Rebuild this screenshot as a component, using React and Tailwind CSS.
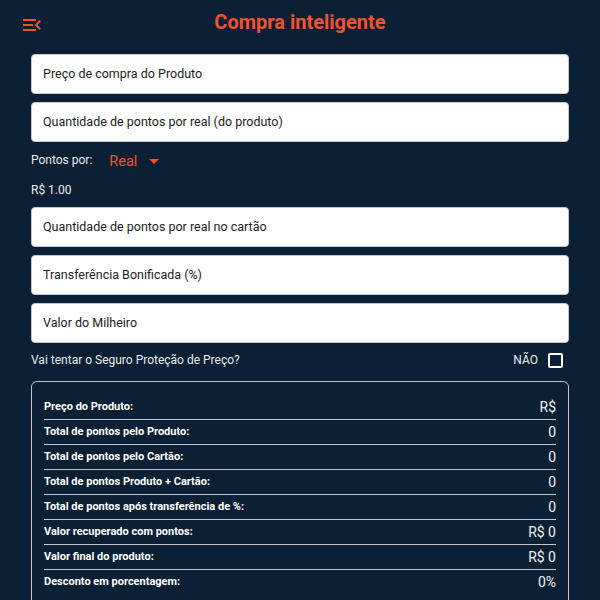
import React from "react";

const Field = ({ label }) => (
  <div className="h-[40px] w-full rounded-[4px] border border-[#c4c8cc] bg-white flex items-center px-[11px] text-[12.5px] text-[#1c1c1c]">
    {label}
  </div>
);

const rows = [
  ["Preço do Produto:", "R$"],
  ["Total de pontos pelo Produto:", "0"],
  ["Total de pontos pelo Cartão:", "0"],
  ["Total de pontos Produto + Cartão:", "0"],
  ["Total de pontos após transferência de %:", "0"],
  ["Valor recuperado com pontos:", "R$ 0"],
  ["Valor final do produto:", "R$ 0"],
  ["Desconto em porcentagem:", "0%"],
];

export default function App() {
  return (
    <div
      className="w-[600px] h-[600px] overflow-hidden bg-[#0b2034] text-white"
      style={{ fontFamily: "Roboto, 'Liberation Sans', sans-serif" }}
    >
      <div className="relative h-[44px] flex items-center justify-center">
        <svg
          className="absolute left-[20px] top-[13px]"
          width="24"
          height="24"
          viewBox="0 0 24 24"
          fill="#f4522d"
        >
          <path d="M3 18h13v-2H3v2zm0-5h10v-2H3v2zm0-7v2h13V6H3zm18 9.59L17.42 12 21 8.41 19.59 7l-5 5 5 5L21 15.59z" />
        </svg>
        <h1 className="text-[20px] font-bold text-[#f4522d] leading-none">Compra inteligente</h1>
      </div>
      <div className="px-[31px] pt-[10px] flex flex-col">
        <div className="flex flex-col gap-[8px]">
          <Field label="Preço de compra do Produto" />
          <Field label="Quantidade de pontos por real (do produto)" />
        </div>
        <div className="mt-[1px] h-[34px] flex items-center text-[12px] text-[#e8ecf0]">
          <span>Pontos por:</span>
          <span className="ml-[17px] mt-[3px] text-[14.5px] text-[#f4522d]">Real</span>
          <svg className="ml-[12px] mt-[2px]" width="10" height="5" viewBox="0 0 10 5" fill="#f4522d">
            <path d="M0 0h10L5 5z" />
          </svg>
        </div>
        <div className="h-[26px] flex items-center text-[12px] text-[#e8ecf0]">R$ 1.00</div>
        <div className="mt-[4px] flex flex-col gap-[8px]">
          <Field label="Quantidade de pontos por real no cartão" />
          <Field label="Transferência Bonificada (%)" />
          <Field label="Valor do Milheiro" />
        </div>
        <div className="h-[34px] flex items-center justify-between text-[12px] text-[#e8ecf0]">
          <span>Vai tentar o Seguro Proteção de Preço?</span>
          <div className="flex items-center gap-[10px] mr-[6px]">
            <span className="text-[12px]">NÃO</span>
            <div className="w-[15px] h-[15px] rounded-[2px] border-2 border-white" />
          </div>
        </div>
        <div className="mt-[4px] rounded-[6px] border border-[#c4c8cc] px-[12px] pt-[13px] pb-[20px]">
          {rows.map(([l, v], i) => (
            <div
              key={i}
              className={`h-[25px] flex items-center justify-between ${i < rows.length - 1 ? "border-b border-[#c4c8cc]" : ""}`}
            >
              <span className="text-[11px] font-bold text-white">{l}</span>
              <span className="text-[14px] text-[#eef1f4]">{v}</span>
            </div>
          ))}
        </div>
      </div>
    </div>
  );
}
